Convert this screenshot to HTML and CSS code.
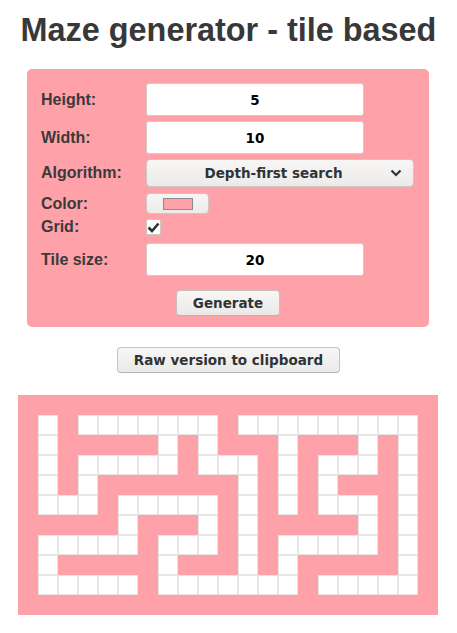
FILE: index.html
```html
<!DOCTYPE html>
<html>
<head>
<meta charset="utf-8">
<title>Maze generator - tile based</title>
<link rel="stylesheet" href="styles.css">
</head>
<body>
<div class="page">
  <h1 class="title">Maze generator - tile based</h1>
  <form class="panel">
    <label class="lbl">Height:</label>
    <div class="ctl"><div class="input">5</div></div>
    <label class="lbl">Width:</label>
    <div class="ctl"><div class="input">10</div></div>
    <label class="lbl">Algorithm:</label>
    <div class="ctl"><div class="select"><span class="select-text">Depth-first search</span><svg class="chev" width="12" height="8" viewBox="0 0 12 8"><polyline points="1.5,1.5 6,6 10.5,1.5" fill="none" stroke="#2e3436" stroke-width="2.2"/></svg></div></div>
    <label class="lbl lbl-color">Color:</label>
    <div class="ctl ctl-color"><div class="colorbtn"><span class="swatch"></span></div></div>
    <label class="lbl lbl-grid">Grid:</label>
    <div class="ctl ctl-grid"><span class="check"><svg width="13" height="11" viewBox="0 0 13 11"><polyline points="1.5,5.5 5,9 11.5,1.5" fill="none" stroke="#2e3436" stroke-width="2.6"/></svg></span></div>
    <label class="lbl lbl-tile">Tile size:</label>
    <div class="ctl ctl-tile"><div class="input">20</div></div>
    <div class="actions"><span class="btn">Generate</span></div>
  </form>
  <div class="raw"><span class="btn">Raw version to clipboard</span></div>
  <div class="maze">
    <span></span><span></span><span></span><span></span><span></span><span></span><span></span><span></span><span></span><span></span><span></span><span></span><span></span><span></span><span></span><span></span><span></span><span></span><span></span><span></span><span></span>
    <span></span><span class="w"></span><span></span><span class="w"></span><span class="w"></span><span class="w"></span><span class="w"></span><span class="w"></span><span class="w"></span><span class="w"></span><span></span><span class="w"></span><span class="w"></span><span class="w"></span><span class="w"></span><span class="w"></span><span class="w"></span><span class="w"></span><span class="w"></span><span class="w"></span><span></span>
    <span></span><span class="w"></span><span></span><span></span><span></span><span></span><span></span><span class="w"></span><span></span><span class="w"></span><span></span><span></span><span></span><span class="w"></span><span></span><span></span><span></span><span class="w"></span><span></span><span class="w"></span><span></span>
    <span></span><span class="w"></span><span></span><span class="w"></span><span class="w"></span><span class="w"></span><span class="w"></span><span class="w"></span><span></span><span class="w"></span><span class="w"></span><span class="w"></span><span></span><span class="w"></span><span></span><span class="w"></span><span class="w"></span><span class="w"></span><span></span><span class="w"></span><span></span>
    <span></span><span class="w"></span><span></span><span class="w"></span><span></span><span></span><span></span><span></span><span></span><span></span><span></span><span class="w"></span><span></span><span class="w"></span><span></span><span class="w"></span><span></span><span></span><span></span><span class="w"></span><span></span>
    <span></span><span class="w"></span><span class="w"></span><span class="w"></span><span></span><span class="w"></span><span class="w"></span><span class="w"></span><span class="w"></span><span class="w"></span><span></span><span class="w"></span><span></span><span class="w"></span><span></span><span class="w"></span><span class="w"></span><span class="w"></span><span></span><span class="w"></span><span></span>
    <span></span><span></span><span></span><span></span><span></span><span class="w"></span><span></span><span></span><span></span><span class="w"></span><span></span><span class="w"></span><span></span><span></span><span></span><span></span><span></span><span class="w"></span><span></span><span class="w"></span><span></span>
    <span></span><span class="w"></span><span class="w"></span><span class="w"></span><span class="w"></span><span class="w"></span><span></span><span class="w"></span><span class="w"></span><span class="w"></span><span></span><span class="w"></span><span></span><span class="w"></span><span class="w"></span><span class="w"></span><span class="w"></span><span class="w"></span><span></span><span class="w"></span><span></span>
    <span></span><span class="w"></span><span></span><span></span><span></span><span></span><span></span><span class="w"></span><span></span><span></span><span></span><span class="w"></span><span></span><span class="w"></span><span></span><span></span><span></span><span></span><span></span><span class="w"></span><span></span>
    <span></span><span class="w"></span><span class="w"></span><span class="w"></span><span class="w"></span><span class="w"></span><span></span><span class="w"></span><span class="w"></span><span class="w"></span><span class="w"></span><span class="w"></span><span class="w"></span><span class="w"></span><span></span><span class="w"></span><span class="w"></span><span class="w"></span><span class="w"></span><span class="w"></span><span></span>
    <span></span><span></span><span></span><span></span><span></span><span></span><span></span><span></span><span></span><span></span><span></span><span></span><span></span><span></span><span></span><span></span><span></span><span></span><span></span><span></span><span></span>
  </div>
</div>
</body>
</html>
```
FILE: styles.css
```css
* { box-sizing: border-box; }
html, body { margin: 0; padding: 0; background: #ffffff; }
body { font-family: "Liberation Sans", Arial, sans-serif; color: #383838; }
.page { width: 457px; }

.title {
  margin: 12px 0 20px;
  font-size: 32.4px;
  line-height: 37px;
  font-weight: bold;
  text-align: center;
  color: #383838;
}

.panel {
  margin: 0 0 0 27px;
  width: 402px;
  background: #ffa1a9;
  border-radius: 5px;
  padding: 14px 14px 11px 14px;
  display: grid;
  grid-template-columns: 105px 1fr;
  row-gap: 5px;
  align-items: center;
}

.lbl {
  font-size: 16px;
  font-weight: bold;
  line-height: 16px;
  color: #3a3a3a;
}
.ctl { display: flex; }

.input {
  width: 218px;
  height: 33px;
  background: #ffffff;
  border: 1px solid #d3cdc8;
  border-radius: 3px;
  display: flex;
  align-items: center;
  justify-content: center;
  font-family: "DejaVu Sans", sans-serif;
  font-weight: bold;
  font-size: 13.5px;
  color: #000000;
}

.select {
  width: 268px;
  height: 28px;
  border: 1px solid #cdc7c2;
  border-radius: 4px;
  background: linear-gradient(#f7f6f5, #edebe9);
  display: flex;
  align-items: center;
  padding-left: 10px;
  font-family: "DejaVu Sans", sans-serif;
  font-weight: bold;
  font-size: 13.5px;
  color: #2e3436;
}
.select-text { flex: 1; text-align: center; }
.chev { margin-right: 11px; margin-left: 0; }

.ctl-color { margin-top: 1px; }
.lbl-color { margin-top: 1px; }
.colorbtn {
  width: 63px;
  height: 21px;
  border: 1px solid #cdc7c2;
  border-radius: 4px;
  background: linear-gradient(#f7f6f5, #edebe9);
  display: flex;
  align-items: center;
  justify-content: center;
}
.swatch {
  width: 30px;
  height: 12px;
  border: 1px solid #8a8a8a;
  background: #ffa1a9;
}

.check {
  width: 15px;
  height: 16px;
  background: #ffffff;
  border: 1px solid #cdc7c2;
  border-radius: 2px;
  display: flex;
  align-items: center;
  justify-content: center;
}
.ctl-tile, .lbl-tile { margin-top: 3px; }

.actions {
  grid-column: 1 / 3;
  display: flex;
  justify-content: center;
  margin-top: 9px;
}

.btn {
  display: inline-flex;
  align-items: center;
  justify-content: center;
  height: 26px;
  padding: 0 16px;
  border: 1px solid #c6c1bc;
  border-bottom-color: #b8b3ae;
  border-radius: 4px;
  background: linear-gradient(#f8f7f6, #ebe9e7);
  font-family: "DejaVu Sans", sans-serif;
  font-weight: bold;
  font-size: 13.5px;
  color: #2e3436;
}

.raw {
  display: flex;
  justify-content: center;
  margin-top: 20px;
}

.maze {
  margin: 22px 0 0 18px;
  width: 420px;
  display: grid;
  grid-template-columns: repeat(21, 20px);
  grid-auto-rows: 20px;
  background: #ffa1a9;
}
.maze span { display: block; }
.maze .w {
  background: #ffffff;
  border: 1px solid #e6e6e6;
}
```
